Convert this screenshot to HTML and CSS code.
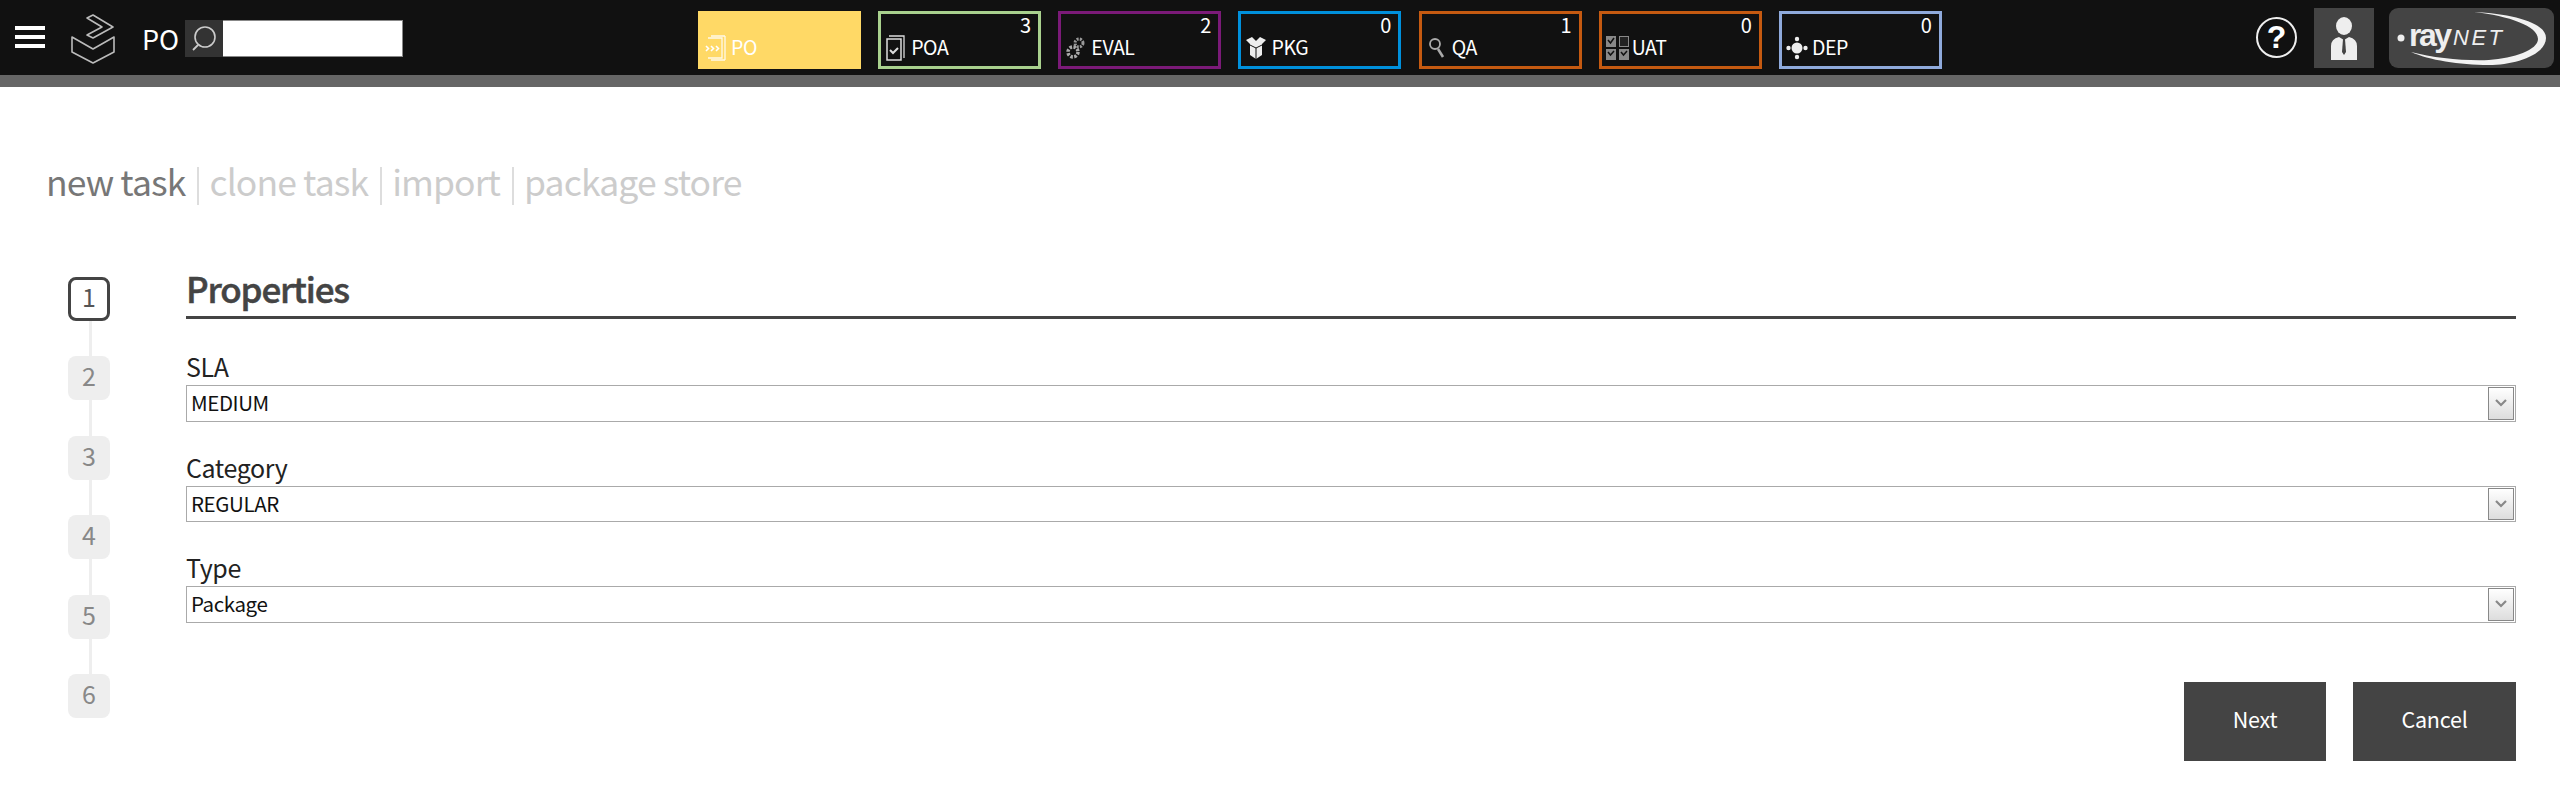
FILE: index.html
```html
<!DOCTYPE html>
<html lang="en">
<head>
<meta charset="utf-8">
<title>New task</title>
<link rel="stylesheet" href="styles.css">
</head>
<body>
<header class="topbar">
  <div class="burger"><span></span><span></span><span></span></div>
  <svg class="brand" width="44" height="50" viewBox="0 0 44 50"><path d="M22 1L42 13L22 24L16 21L31 13L16 4Z M1 23L22 35L43 23V38L22 49L1 38Z" fill="none" stroke="#bbb" stroke-width="1.6" stroke-linejoin="round"/></svg>
  <div class="context">PO</div>
  <div class="search-btn"><svg width="38" height="37" viewBox="0 0 38 37"><circle cx="20" cy="17" r="10" fill="none" stroke="#ccc" stroke-width="1.6"/><path d="M13 25L8 30" stroke="#ccc" stroke-width="1.8"/></svg></div>
  <input class="search-input" type="text" aria-label="Search">
  <nav class="tabs">
    <a class="tab tab-po"><span class="count"></span><span class="tab-label"><span class="tab-icon"><svg width="22" height="26" viewBox="0 0 22 26"><path d="M3 3H17V23H3M20 1V25M6 1H20M6 25H20" fill="none" stroke="#fff" stroke-width="1.3" opacity=".85"/><path d="M1 11l2.500 2.500L1 16M6 11l2.500 2.500L6 16M11 11l2.500 2.500L11 16" fill="none" stroke="#fff" stroke-width="1.600"/></svg></span>PO</span></a>
    <a class="tab tab-poa"><span class="count">3</span><span class="tab-label"><span class="tab-icon"><svg width="20" height="26" viewBox="0 0 20 26"><path d="M3 1H18V23" fill="none" stroke="#ddd" stroke-width="1.300"/><rect x="1" y="4" width="14" height="21" fill="#111" stroke="#ddd" stroke-width="1.500"/><path d="M4 15l3 3 5-5" fill="none" stroke="#ddd" stroke-width="2"/></svg></span>POA</span></a>
    <a class="tab tab-eval"><span class="count">2</span><span class="tab-label"><span class="tab-icon"><svg width="20" height="26" viewBox="0 0 20 26"><circle cx="13" cy="8" r="4" fill="none" stroke="#999" stroke-width="3" stroke-dasharray="2 1.200"/><circle cx="7" cy="17" r="5" fill="none" stroke="#aaa" stroke-width="3.500" stroke-dasharray="2.500 1.400"/></svg></span>EVAL</span></a>
    <a class="tab tab-pkg"><span class="count">0</span><span class="tab-label"><span class="tab-icon"><svg width="22" height="24" viewBox="0 0 22 24"><path d="M1 4L7 1L11 5L15 1L21 4L17 8V19L11 23L5 19V8Z" fill="#eee"/><path d="M5 9L11 12L17 9M11 12V23" fill="none" stroke="#111" stroke-width="1"/></svg></span>PKG</span></a>
    <a class="tab tab-qa"><span class="count">1</span><span class="tab-label"><span class="tab-icon"><svg width="18" height="26" viewBox="0 0 18 26"><circle cx="7" cy="9" r="5" fill="none" stroke="#aaa" stroke-width="1.800"/><path d="M10 14L15 22" stroke="#aaa" stroke-width="2.600"/></svg></span>QA</span></a>
    <a class="tab tab-uat"><span class="count">0</span><span class="tab-label"><span class="tab-icon"><svg width="24" height="26" viewBox="0 0 24 26"><g fill="#888"><rect x="1" y="1" width="10" height="11"/><rect x="1" y="14" width="10" height="11"/><rect x="14" y="14" width="10" height="11"/></g><rect x="14.500" y="1.500" width="9" height="10" fill="#222" stroke="#888"/><path d="M3 5l2.500 3L9 3M3 17l2.500 3L9 16M16 17l2.500 3L22 16" fill="none" stroke="#111" stroke-width="1.500"/></svg></span>UAT</span></a>
    <a class="tab tab-dep"><span class="count">0</span><span class="tab-label"><span class="tab-icon"><svg width="22" height="24" viewBox="0 0 22 24"><g fill="#eee"><circle cx="11" cy="12" r="5.500"/><circle cx="11" cy="3" r="2.200"/><circle cx="11" cy="21" r="2.200"/><circle cx="2.500" cy="12" r="2.200"/><circle cx="19.500" cy="12" r="2.200"/></g></svg></span>DEP</span></a>
  </nav>
  <div class="help">?</div>
  <div class="user"><svg width="60" height="60" viewBox="0 0 60 60"><ellipse cx="30" cy="18" rx="8" ry="9" fill="#eee"/><path d="M17 52V38Q17 31 25 29L30 32L35 29Q43 31 43 38V52Z" fill="#eee"/><path d="M29 31H31L32 44L30 47L28 44Z" fill="#444"/></svg></div>
  <div class="vendor"><svg width="165" height="60" viewBox="0 0 165 60"><circle cx="12" cy="30" r="3.500" fill="#eee"/><text class="logo-ray" x="20" y="38" textLength="43">ray</text><text class="logo-net" x="64" y="37" textLength="49">NET</text><path d="M85 4C125 6 157 15 157 30C157 47 125 57 100 57C70 57 40 52 22 44C45 50 75 53 100 52C125 50 149 42 149 31C149 18 120 8 85 4Z" fill="#f2f2f2"/></svg></div>
</header>
<main class="page">
  <nav class="modes">
    <a class="mode mode-active">new task</a><span class="sep"></span>
    <a class="mode">clone task</a><span class="sep"></span>
    <a class="mode">import</a><span class="sep"></span>
    <a class="mode">package store</a>
  </nav>
  <div class="wizard">
    <ol class="steps">
      <li class="step step-current">1</li>
      <li class="step">2</li>
      <li class="step">3</li>
      <li class="step">4</li>
      <li class="step">5</li>
      <li class="step">6</li>
    </ol>
    <form class="form">
      <h1 class="form-title">Properties</h1>
      <div class="field">
        <label class="field-label" for="sla">SLA</label>
        <div class="select-wrap"><select id="sla" class="select"><option>MEDIUM</option></select><span class="arrow"><svg width="14" height="10" viewBox="0 0 14 10"><path d="M2 2l5 5 5-5" fill="none" stroke="#888" stroke-width="2.200"/></svg></span></div>
      </div>
      <div class="field">
        <label class="field-label" for="category">Category</label>
        <div class="select-wrap"><select id="category" class="select"><option>REGULAR</option></select><span class="arrow"><svg width="14" height="10" viewBox="0 0 14 10"><path d="M2 2l5 5 5-5" fill="none" stroke="#888" stroke-width="2.200"/></svg></span></div>
      </div>
      <div class="field">
        <label class="field-label" for="type">Type</label>
        <div class="select-wrap"><select id="type" class="select"><option>Package</option></select><span class="arrow"><svg width="14" height="10" viewBox="0 0 14 10"><path d="M2 2l5 5 5-5" fill="none" stroke="#888" stroke-width="2.200"/></svg></span></div>
      </div>
      <div class="actions">
        <button type="button" class="btn btn-next">Next</button>
        <button type="button" class="btn btn-cancel">Cancel</button>
      </div>
    </form>
  </div>
</main>
</body>
</html>
```
FILE: styles.css
```css
* { box-sizing: border-box; }
html, body { margin: 0; padding: 0; background: #fff; }
body {
  font-family: "Noto Sans CJK SC", "Noto Sans", sans-serif;
  color: #333;
  overflow: hidden;
}
.topbar {
  display: flex;
  align-items: center;
  height: 87px;
  padding: 0 6px 0 15px;
  background: #111;
  border-bottom: 12px solid #666;
}
.burger { display: flex; flex-direction: column; gap: 5px; width: 30px; margin-bottom: 1px; }
.burger span { display: block; height: 4px; background: #fff; }
.brand { display: block; margin: 3px 0 0 26px; }
.context { width: 43px; margin: 3px 0 0 27px; color: #fff; font-size: 27px; line-height: 36px; }
.search-btn { width: 38px; height: 37px; margin-top: 2px; background: #333; }
.search-btn svg { display: block; }
.search-input { width: 180px; height: 37px; margin-top: 2px; padding: 0; background: #fff; border: 1px solid #888; border-left: 0; border-radius: 0; }
.tabs { display: flex; align-self: flex-start; gap: 17.170px; margin: 11px 0 0 295px; }
.tab {
  display: flex;
  flex-direction: column;
  width: 163px;
  height: 58px;
  border: 3px solid;
  color: #fff;
}
.tab-po { background: #ffd966; border-color: #ffd966; }
.tab-poa { border-color: #a9d18e; }
.tab-eval { border-color: #7b1a78; }
.tab-pkg { border-color: #0090dc; }
.tab-qa, .tab-uat { border-color: #c55a11; }
.tab-dep { border-color: #8faadc; }
.count { height: 22px; padding-right: 7px; text-align: right; font-size: 20px; line-height: 22px; }
.tab-label { display: flex; align-items: center; height: 26px; margin-top: -2px; padding-left: 2px; font-size: 19.500px; letter-spacing: -0.4px; line-height: 26px; }
.tab-icon { display: flex; align-items: center; justify-content: center; width: 26px; height: 26px; margin: 2px 2px 0 0; }
.tab-icon svg { display: block; }
.help {
  width: 41px;
  height: 41px;
  margin-left: auto;
  border: 2px solid #eee;
  border-radius: 50%;
  color: #fff;
  font-family: "Liberation Sans", sans-serif;
  font-size: 32px;
  font-weight: 700;
  line-height: 37px;
  text-align: center;
}
.user { width: 60px; height: 60px; margin: 1px 0 0 17px; background: #444; }
.user svg, .vendor svg { display: block; }
.vendor { width: 165px; height: 60px; margin: 1px 0 0 15px; background: #444; border-radius: 9px; }
.logo-ray { font-family: "Liberation Sans", sans-serif; font-size: 32px; font-weight: 700; fill: #eee; }
.logo-net { font-family: "Liberation Sans", sans-serif; font-size: 22px; font-style: italic; fill: #eee; }

.page { padding: 80px 44px 0 46px; }
.modes { display: flex; align-items: flex-start; gap: 10px; height: 38px; font-size: 35.500px; letter-spacing: -0.900px; line-height: 27px; }
.mode { color: #ccc; }
.mode-active { color: #777; }
.sep { width: 2px; height: 38px; margin-left: 2px; background: #ddd; }
.wizard { display: flex; margin-top: 72px; }
.steps { flex: none; width: 42px; margin: 0 0 0 22px; padding: 0; list-style: none; }
.step {
  position: relative;
  width: 42px;
  height: 44px;
  margin-bottom: 35.400px;
  border-radius: 8px;
  background: #eee;
  color: #888;
  font-size: 25px;
  line-height: 39px;
  text-align: center;
}
.step::after {
  content: "";
  position: absolute;
  left: 21px;
  top: 44px;
  width: 3px;
  height: 36px;
  background: #eee;
}
.step:last-child::after { display: none; }
.step-current { background: #fff; border: 3px solid #444; color: #555; line-height: 33px; }
.step-current::after { left: 18px; top: 41px; }
.form { flex: 1; margin-left: 76px; }
.form-title {
  height: 42px;
  margin: 0 0 32px;
  border-bottom: 3px solid #444;
  color: #444;
  font-size: 35px;
  font-weight: 500;
  letter-spacing: -1.200px;
  line-height: 22px;
  -webkit-text-stroke: 0.5px #444;
}
.field { margin-bottom: 30px; }
.field-label { display: block; height: 34px; color: #222; font-size: 25px; letter-spacing: -0.400px; line-height: 30px; }
.select-wrap { position: relative; height: 36.500px; }
.select {
  display: block;
  width: 100%;
  height: 100%;
  padding: 0 0 2px 4px;
  appearance: none;
  background: #fff;
  border: 1px solid #aaa;
  border-radius: 0;
  color: #111;
  font-family: inherit;
  font-size: 20.500px;
  letter-spacing: -0.400px;
}
.arrow {
  position: absolute;
  top: 2px;
  right: 2px;
  bottom: 2px;
  display: flex;
  align-items: center;
  justify-content: center;
  width: 26px;
  border: 1px solid #888;
  background: linear-gradient(#fff, #ddd);
  pointer-events: none;
}
.actions { display: flex; justify-content: flex-end; gap: 27px; margin-top: 59px; }
.btn {
  height: 79px;
  padding: 0 0 5px;
  border: 0;
  background: #444;
  color: #fff;
  font-family: inherit;
  font-size: 21.500px;
  letter-spacing: -0.200px;
}
.btn-next { width: 142px; }
.btn-cancel { width: 163px; }
```
